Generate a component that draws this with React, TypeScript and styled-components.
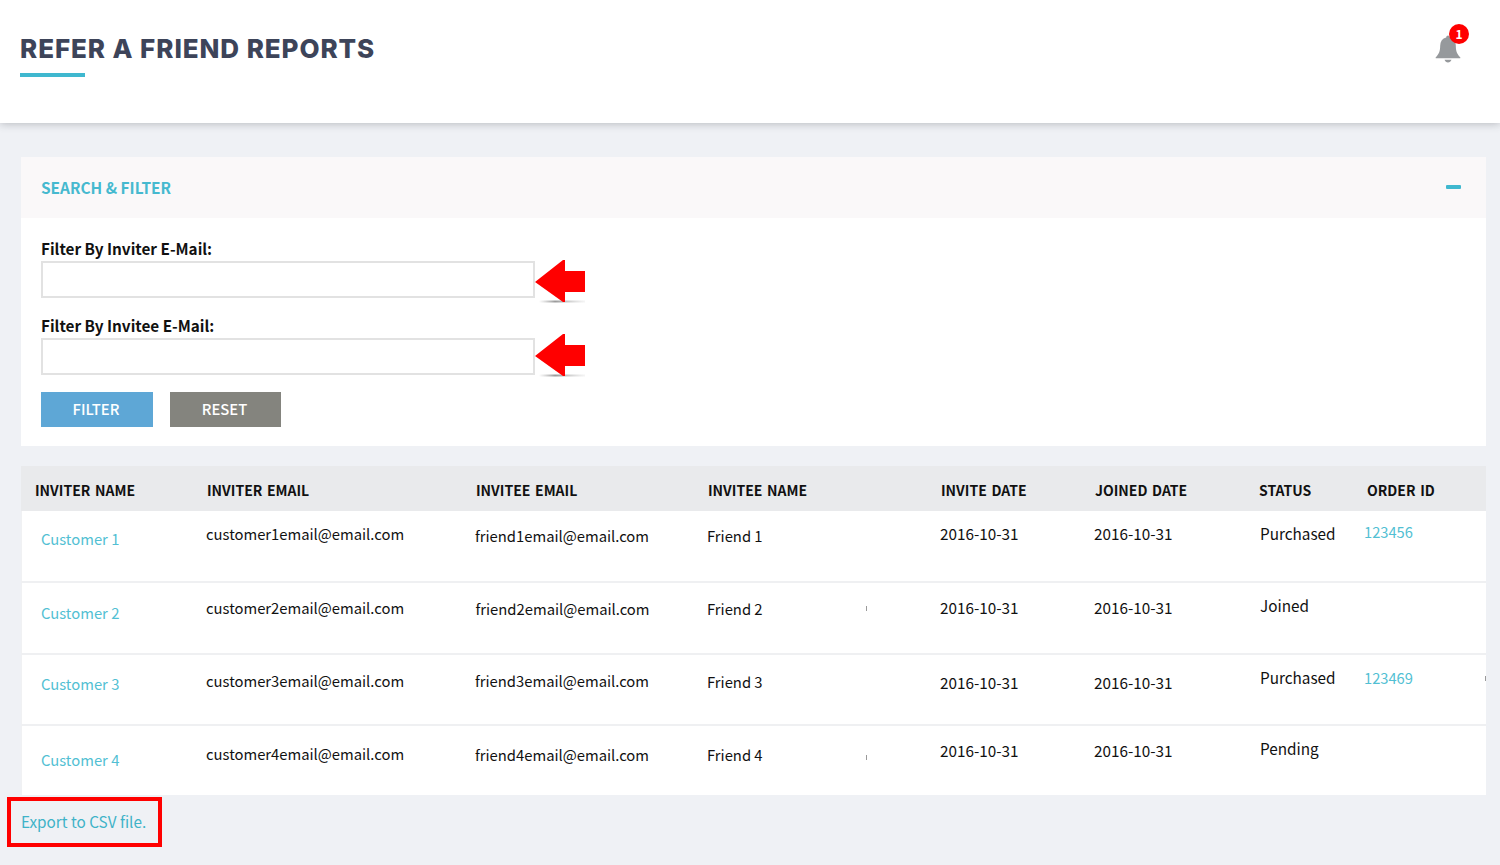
import React from 'react';
import styled, { createGlobalStyle } from 'styled-components';

const GlobalStyle = createGlobalStyle`
  html, body {
    margin: 0;
    padding: 0;
    height: 100%;
    background: #eff1f5;
    font-family: "Noto Sans CJK SC", "Noto Sans", sans-serif;
    color: #111;
  }
  * {
    box-sizing: border-box;
  }
`;

const COLUMNS = '185px 269px 232px 233px 154px 166px 104px 1fr';

interface Customer {
  name: string;
  nameTop: number;
  email: string;
  emailTop: number;
  friendEmail: string;
  friendEmailTop: number;
  friendEmailLeft: number;
  friend: string;
  friendTop: number;
  friendLeft: number;
  inviteTop: number;
  joinedTop: number;
  status: string;
  statusTop: number;
  orderId?: string;
  orderTop?: number;
  height: number;
  tick?: { left: number; top: number };
}

const columnsHead = [
  { label: 'INVITER NAME', indent: 14 },
  { label: 'INVITER EMAIL', indent: 1 },
  { label: 'INVITEE EMAIL', indent: 1 },
  { label: 'INVITEE NAME', indent: 1 },
  { label: 'INVITE DATE', indent: 1 },
  { label: 'JOINED DATE', indent: 1 },
  { label: 'STATUS', indent: -1 },
  { label: 'ORDER ID', indent: 3 },
];

const customers: Customer[] = [
  {
    name: 'Customer 1', nameTop: 16, email: 'customer1email@email.com', emailTop: 11,
    friendEmail: 'friend1email@email.com', friendEmailTop: 13, friendEmailLeft: 0,
    friend: 'Friend 1', friendTop: 13, friendLeft: 0, inviteTop: 11, joinedTop: 11,
    status: 'Purchased', statusTop: 11, orderId: '123456', orderTop: 9, height: 72,
  },
  {
    name: 'Customer 2', nameTop: 18, email: 'customer2email@email.com', emailTop: 13,
    friendEmail: 'friend2email@email.com', friendEmailTop: 14, friendEmailLeft: 0.5,
    friend: 'Friend 2', friendTop: 14, friendLeft: 0, inviteTop: 13, joinedTop: 13,
    status: 'Joined', statusTop: 11, height: 72, tick: { left: 845, top: 23 },
  },
  {
    name: 'Customer 3', nameTop: 17, email: 'customer3email@email.com', emailTop: 14,
    friendEmail: 'friend3email@email.com', friendEmailTop: 14, friendEmailLeft: 0,
    friend: 'Friend 3', friendTop: 15, friendLeft: 0, inviteTop: 16, joinedTop: 16,
    status: 'Purchased', statusTop: 11, orderId: '123469', orderTop: 11, height: 71,
    tick: { left: 1464, top: 21 },
  },
  {
    name: 'Customer 4', nameTop: 22, email: 'customer4email@email.com', emailTop: 16,
    friendEmail: 'friend4email@email.com', friendEmailTop: 17, friendEmailLeft: 0,
    friend: 'Friend 4', friendTop: 17, friendLeft: 0, inviteTop: 13, joinedTop: 13,
    status: 'Pending', statusTop: 11, height: 69, tick: { left: 845, top: 29 },
  },
];

const BellIcon = () => (
  <svg width="26" height="28" viewBox="0 0 26 28" aria-hidden="true">
    <path
      fill="#96999c"
      d="M13 0.5c1 0 1.7.8 1.8 1.9 3.9 1 5.9 3.9 6 8 .1 5 .8 8.1 4.4 11.8.4.5.2 1.1-.5 1.1H1.3c-.7 0-.9-.6-.5-1.1 3.6-3.7 4.3-6.8 4.4-11.8.1-4.1 2.1-7 6-8C11.3 1.3 12 .5 13 .5zM9.5 24.8h7c-.5 1.5-1.9 2.7-3.5 2.7s-3-1.2-3.500-2.7z"
    />
  </svg>
);

const RedArrow = ({ id }: { id: string }) => (
  <svg width="52" height="44" viewBox="0 0 52 44" aria-hidden="true">
    <defs>
      <linearGradient id={id} x1="0" x2="1" y1="0" y2="0">
        <stop offset="0" stopColor="#aaa" stopOpacity="0" />
        <stop offset="0.35" stopColor="#999" />
        <stop offset="1" stopColor="#ccc" stopOpacity="0.2" />
      </linearGradient>
    </defs>
    <rect x="4" y="40.5" width="46" height="2" fill={`url(#${id})`} />
    <polygon fill="#ff0000" points="0,22 28,0 30,0 30,11 50,11 50,32 30,32 30,42 28,42" />
  </svg>
);

export default function App() {
  return (
    <>
      <GlobalStyle />
      <Header>
        <div>
          <Title>REFER A FRIEND REPORTS</Title>
          <TitleRule />
        </div>
        <BellWrap>
          <BellIcon />
          <Badge>1</Badge>
        </BellWrap>
      </Header>

      <Content>
        <Panel>
          <PanelHeader>
            <PanelTitle>SEARCH &amp; FILTER</PanelTitle>
            <Collapse />
          </PanelHeader>
          <PanelBody>
            <FieldLabel>Filter By Inviter E-Mail:</FieldLabel>
            <FieldRow>
              <TextInput type="text" />
              <ArrowSlot $shift={-1}><RedArrow id="arrow-shadow-1" /></ArrowSlot>
            </FieldRow>
            <FieldLabel>Filter By Invitee E-Mail:</FieldLabel>
            <FieldRow>
              <TextInput type="text" />
              <ArrowSlot $shift={-4}><RedArrow id="arrow-shadow-2" /></ArrowSlot>
            </FieldRow>
            <Buttons>
              <ActionButton $bg="#5ea7d6" $width={112}>FILTER</ActionButton>
              <ActionButton $bg="#84847e" $width={111}>RESET</ActionButton>
            </Buttons>
          </PanelBody>
        </Panel>

        <Table>
          <HeadRow>
            {columnsHead.map((col) => (
              <HeadCell key={col.label} $indent={col.indent}>{col.label}</HeadCell>
            ))}
          </HeadRow>
          {customers.map((c, i) => (
            <BodyRow key={c.name} $height={c.height} $last={i === customers.length - 1}>
              <Cell $top={c.nameTop} $left={20}><LinkText>{c.name}</LinkText></Cell>
              <Cell $top={c.emailTop}>{c.email}</Cell>
              <Cell $top={c.friendEmailTop} $left={c.friendEmailLeft}>{c.friendEmail}</Cell>
              <Cell $top={c.friendTop} $left={c.friendLeft}>{c.friend}</Cell>
              <DataCell $top={c.inviteTop - 1}>2016-10-31</DataCell>
              <DataCell $top={c.joinedTop - 1}>2016-10-31</DataCell>
              <DataCell $top={c.statusTop - 1}>{c.status}</DataCell>
              <Cell $top={c.orderTop ?? 0}>{c.orderId && <OrderLink>{c.orderId}</OrderLink>}</Cell>
              {c.tick && <Tick $left={c.tick.left} $top={c.tick.top} />}
            </BodyRow>
          ))}
        </Table>

        <ExportBox>
          <ExportLink>Export to CSV file.</ExportLink>
        </ExportBox>
      </Content>
    </>
  );
}

const Header = styled.header`
  height: 123px;
  background: #fff;
  box-shadow: 0 1px 8px rgba(60, 64, 70, 0.3);
  padding: 33px 30px 0 20px;
  display: flex;
  justify-content: space-between;
  align-items: flex-start;
`;

const Title = styled.h1`
  margin: 0;
  font-family: Inter, "Liberation Sans", sans-serif;
  font-size: 26px;
  line-height: 32px;
  font-weight: 800;
  letter-spacing: 0.92px;
  color: #3d4459;
`;

const TitleRule = styled.div`
  width: 65px;
  height: 4px;
  margin-top: 8px;
  background: #3fb8cf;
`;

const BellWrap = styled.div`
  position: relative;
  width: 26px;
  height: 28px;
  margin-top: 2px;
  margin-right: 9px;
`;

const Badge = styled.span`
  position: absolute;
  top: -11px;
  left: 14px;
  width: 20px;
  height: 20px;
  border-radius: 50%;
  background: #ff0000;
  color: #fff;
  font-size: 12px;
  font-weight: 700;
  line-height: 20px;
  text-align: center;
`;

const Content = styled.main`
  padding: 34px 14px 0 21px;
`;

const Panel = styled.section`
  background: #fff;
  height: 289px;
`;

const PanelHeader = styled.div`
  height: 61px;
  background: #faf8f9;
  padding: 0 25px 2px 20px;
  display: flex;
  align-items: center;
  justify-content: space-between;
`;

const PanelTitle = styled.h2`
  margin: 0;
  font-size: 15.4px;
  font-weight: 700;
  color: #45b9cf;
`;

const Collapse = styled.span`
  width: 15px;
  height: 4px;
  border-radius: 1px;
  background: #3fb8cf;
`;

const PanelBody = styled.div`
  padding: 19px 20px 0;
`;

const FieldLabel = styled.label`
  display: block;
  height: 24px;
  font-size: 15.3px;
  line-height: 22px;
  font-weight: 700;
  color: #111;
`;

const FieldRow = styled.div`
  display: flex;
  align-items: flex-start;
  height: 53px;
`;

const ArrowSlot = styled.div<{ $shift: number }>`
  margin-top: ${(p) => p.$shift}px;
  line-height: 0;
`;

const TextInput = styled.input`
  width: 494px;
  height: 37px;
  border: 2px solid #e2e2e2;
  background: #fff;
  outline: none;
  flex: none;
`;

const Buttons = styled.div`
  display: flex;
  gap: 17px;
  margin-top: 1px;
`;

const ActionButton = styled.button<{ $bg: string; $width: number }>`
  width: ${(p) => p.$width}px;
  height: 35px;
  border: none;
  padding: 0 2px 2px 0;
  background: ${(p) => p.$bg};
  color: #fff;
  font-family: inherit;
  font-size: 14.8px;
  font-weight: 500;
`;

const Table = styled.section`
  margin-top: 20px;
`;

const HeadRow = styled.div`
  display: grid;
  grid-template-columns: ${COLUMNS};
  height: 45px;
  background: #e9eaec;
  align-items: center;
`;

const HeadCell = styled.div<{ $indent: number }>`
  margin-left: ${(p) => p.$indent}px;
  padding-top: 3px;
  font-size: 14px;
  font-weight: 700;
  word-spacing: 1.5px;
  color: #111;
  white-space: nowrap;
`;

const BodyRow = styled.div<{ $height: number; $last: boolean }>`
  position: relative;
  display: grid;
  grid-template-columns: ${COLUMNS};
  height: ${(p) => p.$height}px;
  background: #fff;
  box-shadow: inset 1px 0 0 #f0f1f3;
  border-bottom: ${(p) => (p.$last ? 'none' : '2px solid #eff0f2')};
`;

const Tick = styled.span<{ $left: number; $top: number }>`
  position: absolute;
  left: ${(p) => p.$left}px;
  top: ${(p) => p.$top}px;
  width: 1px;
  height: 5px;
  background: #9a9a9a;
`;

const Cell = styled.div<{ $top: number; $left?: number }>`
  padding-top: ${(p) => p.$top}px;
  padding-left: ${(p) => p.$left ?? 0}px;
  font-size: 14.8px;
  line-height: 24px;
  color: #111;
  white-space: nowrap;
`;

const DataCell = styled(Cell)`
  font-size: 15.3px;
`;

const LinkText = styled.span`
  color: #52bfd3;
`;

const OrderLink = styled.span`
  color: #52bfd3;
  font-size: 14.7px;
`;

const ExportBox = styled.div`
  width: 155px;
  height: 50px;
  margin: 2px 0 0 -14px;
  border: 4px solid #ff0000;
  padding: 0 0 2px 10px;
  display: flex;
  align-items: center;
`;

const ExportLink = styled.span`
  font-size: 15.3px;
  color: #3fb3c8;
  white-space: nowrap;
`;
